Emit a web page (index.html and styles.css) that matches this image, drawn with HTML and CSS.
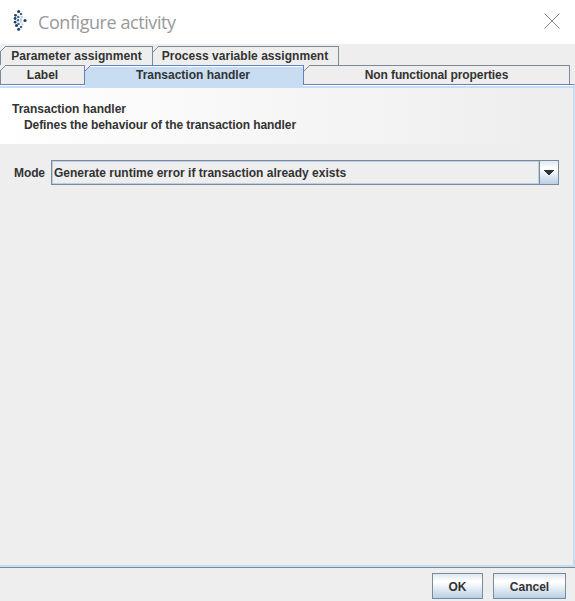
FILE: index.html
```html
<!DOCTYPE html>
<html lang="en">
<head>
<meta charset="utf-8">
<title>Configure activity</title>
<link rel="stylesheet" href="styles.css">
</head>
<body>
<div class="dialog">
  <header class="titlebar">
    <svg class="logo" width="14" height="22" viewBox="0 0 14 22">
      <g fill="#1d3f66"><circle cx="5.6" cy="1.5" r="1.5"/><circle cx="2.5" cy="5.3" r="1.4"/><circle cx="2.1" cy="8.5" r="1.4"/><circle cx="2.1" cy="12.2" r="1.4"/><circle cx="3.5" cy="15.6" r="1.5"/><circle cx="5.6" cy="19.3" r="1.5"/><circle cx="12" cy="10.5" r="1.6"/></g>
      <g fill="#3f6b97"><circle cx="8" cy="4" r="1.3"/><circle cx="5.3" cy="7" r="1.3"/><circle cx="5" cy="10.3" r="1.2"/><circle cx="5.5" cy="14" r="1.3"/><circle cx="8" cy="17" r="1.3"/></g>
      <g fill="#c5cbd2"><circle cx="9" cy="7" r="1.2"/><circle cx="8" cy="9.5" r="1.2"/><circle cx="8" cy="12" r="1.2"/><circle cx="9.5" cy="14.3" r="1.1"/></g>
    </svg>
    <h1 class="title">Configure activity</h1>
    <svg class="close" width="16" height="16" viewBox="0 0 16 16"><path d="M.5.5l15 15M15.5.5l-15 15" stroke="#858585" fill="none"/></svg>
  </header>
  <nav class="tabs">
    <div class="row">
      <div class="tab parameter"><svg class="corner" width="6" height="6"><path d="M0 6L6 0"/></svg><span>Parameter assignment</span></div>
      <div class="tab process"><svg class="corner" width="6" height="6"><path d="M0 6L6 0"/></svg><span>Process variable assignment</span></div>
    </div>
    <div class="row">
      <div class="tab label"><svg class="corner" width="6" height="6"><path d="M0 6L6 0"/></svg><span>Label</span></div>
      <div class="tab selected"><svg class="corner" width="6" height="6"><path d="M0 6L6 0"/></svg><span>Transaction handler</span></div>
      <div class="tab properties"><svg class="corner" width="6" height="6"><path d="M0 6L6 0"/></svg><span>Non functional properties</span></div>
    </div>
  </nav>
  <main class="panel">
    <section class="intro">
      <div class="heading">Transaction handler</div>
      <div class="description">Defines the behaviour of the transaction handler</div>
    </section>
    <div class="field">
      <span class="mode">Mode</span>
      <div class="combo">
        <div class="value">Generate runtime error if transaction already exists</div>
        <div class="arrow"><svg width="10" height="5" shape-rendering="crispEdges"><path d="M0 0h10v1h-1v1h-1v1h-1v1h-1v1h-2v-1h-1v-1h-1v-1h-1v-1h-1z" fill="#333"/></svg></div>
      </div>
    </div>
  </main>
  <footer class="actions">
    <button class="ok">OK</button>
    <button class="cancel">Cancel</button>
  </footer>
</div>
</body>
</html>
```
FILE: styles.css
```css
* { box-sizing: border-box; }
body { margin: 0; background: #eee; color: #333; font: bold 12px/16px "Liberation Sans", Arial, sans-serif; }
.dialog { width: 575px; height: 601px; display: flex; flex-direction: column; overflow: hidden; }
.titlebar { height: 44px; flex: none; background: #fff; display: flex; align-items: flex-start; padding: 10px 15px 0 13px; }
.logo { flex: none; }
.title { margin: 0 auto 0 11px; font: 400 18px/25px "Open Sans", "Noto Sans", sans-serif; letter-spacing: -.43px; color: #999; white-space: nowrap; }
.close { margin-top: 3px; flex: none; }
.tabs { padding-top: 2px; height: 40px; flex: none; }
.row { display: flex; height: 19px; }
.tab { position: relative; height: 19px; border-top: 1px solid #7a8a99; border-right: 1px solid #7a8a99; text-align: center; line-height: 18px; white-space: nowrap; }
.tab:first-child { border-left: 1px solid #7a8a99; }
.corner { position: absolute; left: 0; top: -1px; background: linear-gradient(135deg, #eee 50%, transparent 50%); }
.tab:first-child .corner { left: -1px; }
.corner path { stroke: #7a8a99; fill: none; }
.parameter { width: 153px; letter-spacing: .1px; }
.process { width: 186px; letter-spacing: .04px; padding-right: 1px; }
.label { width: 85px; border-right-color: #6382bf; }
.selected { width: 219px; background: #c8ddf2; border-color: #6382bf; height: 20px; z-index: 1; box-shadow: inset 0 1px #fff; padding-right: 2px; }
.selected::after { content: ""; position: absolute; left: 0; right: 0; top: 19px; height: 2px; background: #c8ddf2; }
.selected .corner path { stroke: #6382bf; }
.properties { width: 266px; letter-spacing: -.1px; }
.panel { height: 483px; flex: none; border-top: 1px solid #6382bf; border-right: 2px solid #c8ddf2; border-bottom: 2px solid #c8ddf2; box-shadow: inset 0 1px #fff, inset 0 3px #c8ddf2; padding-top: 3px; }
.intro { height: 56px; padding: 13px 12px 0; background: linear-gradient(to right, #fff, #eee 95%); }
.heading, .description { white-space: nowrap; }
.description { padding-left: 12px; letter-spacing: -.085px; }
.field { display: flex; align-items: center; padding: 16px 14px 0; }
.mode { width: 37px; flex: none; letter-spacing: -.1px; }
.combo { display: flex; width: 508px; height: 25px; border: 1px solid #7a8a99; flex: none; }
.value { flex: 1; border: 1px solid #b8cfe5; line-height: 22px; padding-left: 1px; white-space: nowrap; }
.arrow { width: 19px; border-left: 1px solid #7a8a99; background: linear-gradient(#dde8f3, #fff 30%, #fff 35%, #b8cfe5); display: flex; align-items: center; justify-content: center; }
.actions { flex: 1; border-top: 1px solid #7a8a99; display: flex; justify-content: flex-end; gap: 10px; padding: 5px 9px 0 0; }
button { font: inherit; color: inherit; height: 26px; padding: 2px 0 0; border: 1px solid #7a8a99; background: linear-gradient(#dde8f3, #fff 30%, #fff 35%, #b8cfe5); }
.ok { width: 51px; }
.cancel { width: 73px; }
```
